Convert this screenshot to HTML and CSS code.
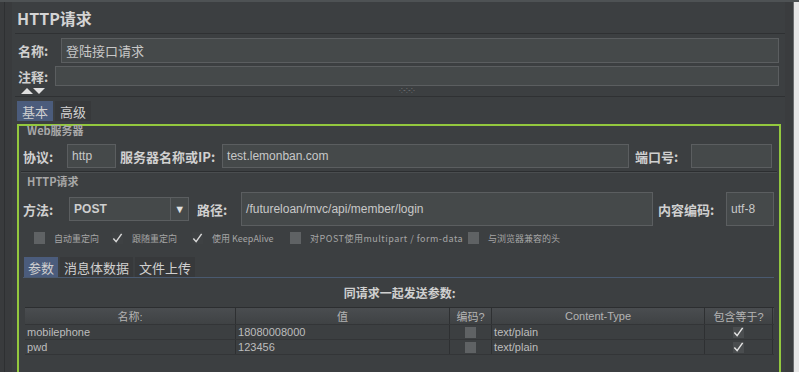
FILE: index.html
```html
<!DOCTYPE html>
<html>
<head>
<meta charset="utf-8">
<link rel="stylesheet" href="styles.css">
</head>
<body>
<div class="frame">
  <div class="lstrip"><div class="lline"></div></div>
  <div class="main">
    <div class="title">HTTP请求</div>
    <div class="row name-row">
      <div class="lbl">名称:</div>
      <div class="field big">登陆接口请求</div>
    </div>
    <div class="row cmt-row">
      <div class="lbl cmt">注释:</div>
      <div class="field cmtf"></div>
    </div>
    <div class="arrows"><span class="tri up"></span><span class="tri down"></span><span class="grip">⁘⁘⁘</span></div>
    <div class="tabs top-tabs">
      <div class="tab sel">基本</div>
      <div class="tab">高级</div>
    </div>
    <div class="green">
      <div class="legend">Web服务器</div>
      <div class="row srv-row">
        <div class="lbl2 w-proto">协议:</div>
        <div class="field proto">http</div>
        <div class="lbl2 ip">服务器名称或IP:</div>
        <div class="field host">test.lemonban.com</div>
        <div class="lbl2 port">端口号:</div>
        <div class="field portf"></div>
      </div>
      <div class="sep"></div>
      <div class="legend l2">HTTP请求</div>
      <div class="row meth-row">
        <div class="lbl2 w-meth">方法:</div>
        <div class="select"><span class="sv">POST</span><span class="arr">▼</span></div>
        <div class="lbl2 path">路径:</div>
        <div class="field pathf">/futureloan/mvc/api/member/login</div>
        <div class="lbl2 enc">内容编码:</div>
        <div class="field encf">utf-8</div>
      </div>
      <div class="checks">
        <span class="cb"></span><span class="cl c-a">自动重定向</span>
        <span class="cb on"><svg viewBox="0 0 12 12" width="12" height="12"><path d="M1.5 6.5 L4.5 10 L10.5 1.5" fill="none" stroke="#d8d8d8" stroke-width="1.6"/></svg></span><span class="cl c-b">跟随重定向</span>
        <span class="cb on"><svg viewBox="0 0 12 12" width="12" height="12"><path d="M1.5 6.5 L4.5 10 L10.5 1.5" fill="none" stroke="#d8d8d8" stroke-width="1.6"/></svg></span><span class="cl c-c">使用 KeepAlive</span>
        <span class="cb"></span><span class="cl c-d">对POST使用multipart / form-data</span>
        <span class="cb"></span><span class="cl">与浏览器兼容的头</span>
      </div>
      <div class="tabs sub-tabs">
        <div class="tab sel">参数</div>
        <div class="tab">消息体数据</div>
        <div class="tab">文件上传</div>
      </div>
      <div class="params">
        <div class="ptitle">同请求一起发送参数:</div>
        <div class="table">
          <div class="tr th">
            <div class="c1">名称:</div><div class="c2">值</div><div class="c3">编码?</div><div class="c4">Content-Type</div><div class="c5">包含等于?</div>
          </div>
          <div class="tr">
            <div class="c1 l">mobilephone</div><div class="c2 l">18080008000</div><div class="c3"><span class="tcb"></span></div><div class="c4 l">text/plain</div><div class="c5"><span class="tcb on"><svg viewBox="0 0 12 12" width="12" height="12"><path d="M1.5 6.5 L4.5 10 L10.5 1.5" fill="none" stroke="#e4e4e4" stroke-width="1.6"/></svg></span></div>
          </div>
          <div class="tr">
            <div class="c1 l">pwd</div><div class="c2 l">123456</div><div class="c3"><span class="tcb"></span></div><div class="c4 l">text/plain</div><div class="c5"><span class="tcb on"><svg viewBox="0 0 12 12" width="12" height="12"><path d="M1.5 6.5 L4.5 10 L10.5 1.5" fill="none" stroke="#e4e4e4" stroke-width="1.6"/></svg></span></div>
          </div>
        </div>
      </div>
    </div>
  </div>
  <div class="rstrip"><div class="rline"></div></div>
</div>
</body>
</html>
```
FILE: styles.css
```css
* { box-sizing: border-box; }
html, body { margin: 0; padding: 0; }
body {
  width: 799px; height: 372px; overflow: hidden;
  background: #3c3f41;
  font-family: "Noto Sans CJK SC", "Liberation Sans", sans-serif;
  color: #c4c4c4;
  font-size: 12px;
}
.frame { display: flex; height: 372px; border-top: 2px solid #4e5254; }
.lstrip { width: 13px; background: #393b3d; }
.lline { margin-left: 4px; width: 1px; height: 100%; background: #2e3032; }
.rstrip { width: 15px; background: #3a3c3e; display: flex; justify-content: flex-end; }
.rline { width: 6px; height: 100%; background: #e6e6e6; border-left: 1px solid #6a6c6e; }
.main { flex: 1; display: flex; flex-direction: column; padding-left: 3px; }
.title {
  height: 32px; padding-top: 4px; padding-left: 2px;
  font-size: 16px; font-weight: bold; color: #d4d4d4; line-height: 24px;
  border-bottom: 1px solid #2f3133;
}
.row { display: flex; align-items: center; }
.name-row { margin-top: 4px; height: 25px; }
.lbl { width: 46px; padding-left: 3px; font-size: 13px; font-weight: bold; color: #d0d0d0; }
.lbl.cmt { width: 40px; }
.field {
  background: #45494a; border: 1px solid #5b5e60; height: 100%;
  display: flex; align-items: center; padding-left: 4px; color: #c8c8c8;
  font-family: "Liberation Sans", "Noto Sans CJK SC", sans-serif;
}
.field.big { flex: 1; margin-right: 6px; font-family: "Noto Sans CJK SC", sans-serif; font-size: 13px; }
.cmt-row { margin-top: 3px; height: 20px; }
.cmtf { flex: 1; margin-right: 6px; }
.arrows { height: 11px; display: flex; align-items: center; padding-left: 6px; border-bottom: 1px solid #2f3133; position: relative; }
.tri { width: 0; height: 0; border-left: 6px solid transparent; border-right: 6px solid transparent; }
.tri.up { border-bottom: 6px solid #e0e0e0; }
.tri.down { border-top: 6px solid #e0e0e0; }
.grip { position: absolute; left: 384px; top: -1px; font-size: 7px; color: #8a8a8a; letter-spacing: -1px; }
.tabs { display: flex; }
.top-tabs { margin-top: 4px; height: 20px; padding-left: 2px; }
.tab {
  padding: 0 5px; height: 100%; display: flex; align-items: center;
  font-size: 13px; color: #d0d0d0; background: #37393b; margin-right: 2px;
}
.tab.sel { background: #4b5c7c; }
.green {
  margin-top: 3px; margin-left: 2px; margin-right: 4px;
  border: 2px solid #93c83e; border-bottom: none;
  flex: 1; display: flex; flex-direction: column; padding: 0 5px 0 4px;
}
.legend { font-size: 11px; font-weight: bold; color: #a8a8a8; padding-left: 4px; height: 12px; line-height: 10px; margin-top: -1px; }
.srv-row { margin-top: 7px; height: 24px; }
.lbl2 { font-size: 13px; font-weight: bold; color: #d0d0d0; white-space: nowrap; }
.w-proto { width: 44px; }
.proto { width: 49px; }
.ip { width: 106px; padding-left: 4px; }
.host { width: 407px; }
.port { width: 62px; padding-left: 6px; }
.portf { width: 81px; }
.sep { height: 1px; background: #2c2e30; margin: 3px -3px 0 -2px; box-shadow: 0 1px 0 #4a4d4f; }
.l2 { margin-top: 4px; }
.meth-row { margin-top: 4px; height: 34px; }
.w-meth { width: 46px; }
.select {
  width: 120px; height: 24px; background: #45494a; border: 1px solid #5b5e60;
  display: flex; align-items: center; justify-content: space-between; padding: 0 0 0 4px;
  font-family: "Liberation Sans", sans-serif; font-weight: bold; font-size: 12px; color: #cfcfcf;
}
.arr { font-size: 11px; color: #e0e0e0; border-left: 1px solid #5b5e60; height: 100%; display: flex; align-items: center; padding: 0 3px; }
.path { width: 52px; padding-left: 8px; }
.pathf { width: 412px; }
.enc { width: 73px; padding-left: 5px; }
.encf { width: 48px; }
.checks { display: flex; align-items: center; height: 14px; margin-top: 5px; padding-left: 11px; font-size: 9px; color: #a6a6a6; }
.cb { width: 11px; height: 12px; background: #5f6264; display: inline-flex; align-items: center; justify-content: center; margin-right: 9px; flex: none; }
.cb.on { background: #3e4143; }
.cl { margin-right: 13px; white-space: nowrap; flex: none; }
.c-a { width: 45px; }
.c-b { width: 47px; }
.c-c { width: 65px; }
.c-d { width: 145px; letter-spacing: 0.5px; }
.sub-tabs { margin-top: 12px; height: 21px; padding-left: 1px; border-bottom: 1px solid #4a5a70; }
.sub-tabs .tab { font-size: 13px; padding: 0 4px; }
.params { display: flex; flex-direction: column; padding-left: 2px; }
.ptitle { text-align: center; height: 29px; line-height: 30px; font-size: 12px; font-weight: bold; color: #d0d0d0; }
.table { border-top: 1px solid #2c2e30; }
.tr { display: flex; height: 15px; border-bottom: 1px solid #333537; }
.tr > div { border-right: 1px solid #2e3032; display: flex; align-items: center; justify-content: center; font-size: 11px; color: #bdbdbd; font-family: "Liberation Sans", "Noto Sans CJK SC", sans-serif; }
.tr > div.l { justify-content: flex-start; padding-left: 2px; }
.th { height: 17px; background: linear-gradient(#4a4d50, #3f4244); }
.th > div { color: #b4b4b4; }
.c1 { width: 211px; }
.c2 { width: 214px; }
.c3 { width: 42px; }
.c4 { width: 213px; }
.c5 { width: 68px; }
.tcb { width: 11px; height: 11px; background: #5f6264; display: inline-flex; align-items: center; justify-content: center; }
.tcb.on { background: #4a4d4f; }
```
